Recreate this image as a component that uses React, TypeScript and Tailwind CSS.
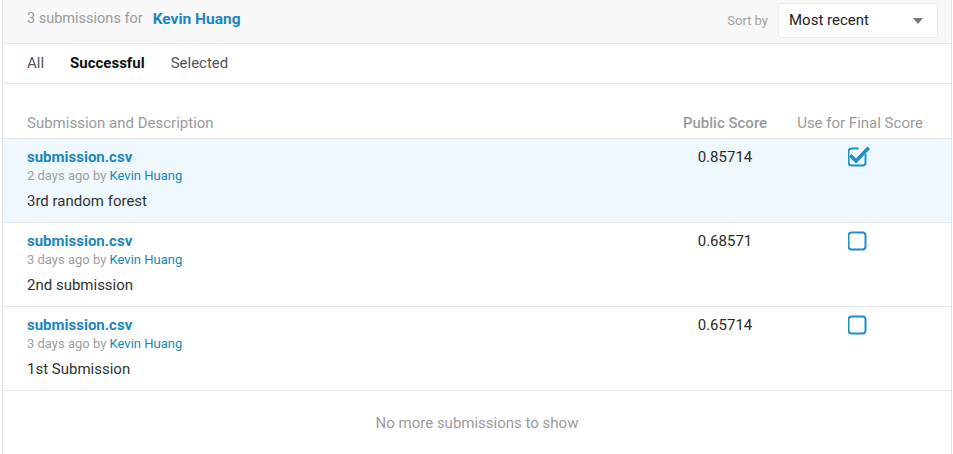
import React from "react";

interface Submission {
  file: string;
  when: string;
  author: string;
  description: string;
  score: string;
  selected: boolean;
}

const submissions: Submission[] = [
  {
    file: "submission.csv",
    when: "2 days ago",
    author: "Kevin Huang",
    description: "3rd random forest",
    score: "0.85714",
    selected: true,
  },
  {
    file: "submission.csv",
    when: "3 days ago",
    author: "Kevin Huang",
    description: "2nd submission",
    score: "0.68571",
    selected: false,
  },
  {
    file: "submission.csv",
    when: "3 days ago",
    author: "Kevin Huang",
    description: "1st Submission",
    score: "0.65714",
    selected: false,
  },
];

function Checkbox({ checked }: { checked: boolean }) {
  return (
    <svg width="24" height="24" viewBox="0 0 24 24" aria-hidden="true">
      <rect
        x="0.5"
        y="3.5"
        width="17"
        height="17"
        rx="3"
        fill="none"
        stroke="#1e8ec6"
        strokeWidth="2"
      />
      {checked && (
        <>
          <rect x="10.5" y="0" width="13" height="9" fill="#eef8fe" />
          <path
            d="M3.5 11.5 L8 16 L19.5 4"
            fill="none"
            stroke="#1e8ec6"
            strokeWidth="3.6"
            strokeLinecap="square"
          />
        </>
      )}
    </svg>
  );
}

function SubmissionRow({ item }: { item: Submission }) {
  return (
    <div
      className={
        "flex h-[84px] border-b border-[#e8e8e8] pr-[13px] " +
        (item.selected ? "bg-[#eef8fe]" : "bg-white")
      }
    >
      <div className="flex-1 pl-6 pt-[9px]">
        <div className="text-[15px] font-bold leading-[18px] text-[#1b87bd]">
          {item.file}
        </div>
        <div className="mt-[2px] text-[13px] leading-[16px] text-[#a0a0a0]">
          {item.when} by <span className="text-[#1b87bd]">{item.author}</span>
        </div>
        <div className="mt-[8px] text-[15px] leading-[18px] text-[#333]">
          {item.description}
        </div>
      </div>
      <div className="w-[114px] pt-[9px] text-center text-[15px] leading-[18px] text-[#2a2a2a]">
        {item.score}
      </div>
      <div className="flex w-[156px] justify-center pt-[6px]">
        <Checkbox checked={item.selected} />
      </div>
    </div>
  );
}

export default function App() {
  return (
    <div className="h-[454px] bg-white font-['Roboto',_'Liberation_Sans',_sans-serif]">
      <div className="ml-[2px] h-full w-[950px] border-x border-[#e3e3e3]">
        <div className="flex h-[44px] items-start justify-between border-b border-[#e8e8e8] bg-[#f8f8f8] pl-6 pr-[13px]">
          <div className="flex items-center gap-[10px] pt-[10px] leading-[18px]">
            <span className="text-[14.5px] text-[#9a9a9a]">3 submissions for</span>
            <span className="text-[15.5px] font-bold text-[#1b87bd]">Kevin Huang</span>
          </div>
          <div className="flex items-center gap-[10px] pt-[3px]">
            <span className="text-[13px] text-[#a0a0a0]">Sort by</span>
            <div className="flex h-[35px] w-[160px] items-center justify-between rounded-[3px] border border-[#ececec] bg-white pl-[10px] pr-[14px] text-[15px] text-[#222]">
              <span>Most recent</span>
              <svg width="10" height="6" viewBox="0 0 10 6" aria-hidden="true">
                <path d="M0 0 H10 L5 6 Z" fill="#777" />
              </svg>
            </div>
          </div>
        </div>

        <div className="flex h-[40px] items-center gap-[26px] border-b border-[#e8e8e8] pl-6 text-[15px]">
          <span className="text-[#555]">All</span>
          <span className="font-bold text-[#111]">Successful</span>
          <span className="text-[#555]">Selected</span>
        </div>

        <div className="flex h-[55px] items-end border-b border-[#e3e8ec] pb-[6px] pr-[13px] text-[15px] leading-[18px] text-[#9a9a9a]">
          <div className="flex-1 pl-6">Submission and Description</div>
          <div className="w-[114px] text-center font-medium">Public Score</div>
          <div className="w-[156px] text-center">Use for Final Score</div>
        </div>

        {submissions.map((s, i) => (
          <SubmissionRow key={i} item={s} />
        ))}

        <div className="pt-[21px] text-center text-[15px] text-[#9a9a9a]">
          No more submissions to show
        </div>
      </div>
    </div>
  );
}
